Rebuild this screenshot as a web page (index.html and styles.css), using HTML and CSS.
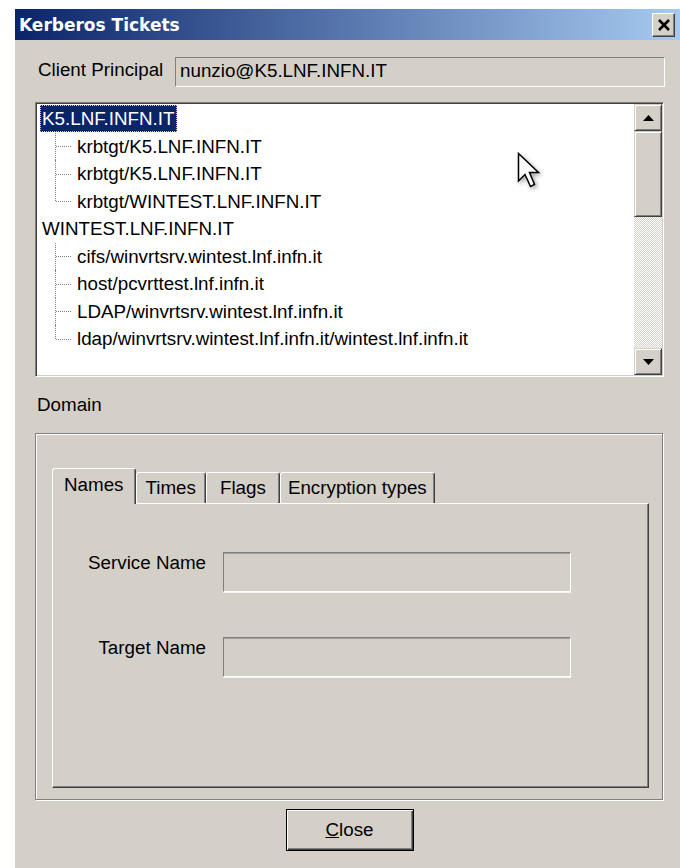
FILE: index.html
```html
<!DOCTYPE html>
<html lang="en">
<head>
<meta charset="utf-8">
<title>Kerberos Tickets</title>
<link rel="stylesheet" href="styles.css">
</head>
<body>
<div class="window">
  <div class="titlebar">
    <span class="title">Kerberos Tickets</span>
    <button class="caption-btn" aria-label="Close">
      <svg width="14" height="12" viewBox="0 0 14 12"><path d="M2 1 L12 11 M12 1 L2 11" stroke="#000" stroke-width="2.6" fill="none"/></svg>
    </button>
  </div>

  <div class="client-row">
    <span class="client-label">Client Principal</span>
    <div class="static-field">nunzio@K5.LNF.INFN.IT</div>
  </div>

  <div class="tree">
    <ul class="tree-list">
      <li class="realm">
        <div class="row"><span class="item selected">K5.LNF.INFN.IT</span></div>
        <ul class="children">
          <li class="row"><span class="item">krbtgt/K5.LNF.INFN.IT</span></li>
          <li class="row"><span class="item">krbtgt/K5.LNF.INFN.IT</span></li>
          <li class="row"><span class="item">krbtgt/WINTEST.LNF.INFN.IT</span></li>
        </ul>
      </li>
      <li class="realm">
        <div class="row"><span class="item">WINTEST.LNF.INFN.IT</span></div>
        <ul class="children">
          <li class="row"><span class="item">cifs/winvrtsrv.wintest.lnf.infn.it</span></li>
          <li class="row"><span class="item">host/pcvrttest.lnf.infn.it</span></li>
          <li class="row"><span class="item">LDAP/winvrtsrv.wintest.lnf.infn.it</span></li>
          <li class="row"><span class="item">ldap/winvrtsrv.wintest.lnf.infn.it/wintest.lnf.infn.it</span></li>
        </ul>
      </li>
    </ul>
    <div class="scrollbar">
      <div class="sb-btn">
        <svg width="11" height="6" viewBox="0 0 11 6"><polygon points="5.5,0 11,6 0,6" fill="#000"/></svg>
      </div>
      <div class="sb-track"><div class="sb-thumb"></div></div>
      <div class="sb-btn">
        <svg width="11" height="6" viewBox="0 0 11 6"><polygon points="0,0 11,0 5.5,6" fill="#000"/></svg>
      </div>
    </div>
    <svg class="pointer" width="26" height="38" viewBox="0 0 26 38">
      <polygon points="1.5,1.5 1.5,29 8,22.5 13.5,34.5 17.5,32.5 12.5,20.5 21.5,20.5" fill="#fff" stroke="#000" stroke-width="1.5" stroke-linejoin="miter"/>
    </svg>
  </div>

  <div class="domain-label">Domain</div>

  <div class="group">
    <div class="tabs">
      <div class="tab active">Names</div>
      <div class="tab">Times</div>
      <div class="tab tab-wide">Flags</div>
      <div class="tab tab-tight">Encryption types</div>
    </div>
    <div class="tab-panel">
      <div class="field-grid">
        <span class="field-label">Service Name</span>
        <div class="etched-field"></div>
        <span class="field-label">Target Name</span>
        <div class="etched-field"></div>
      </div>
    </div>
  </div>

  <div class="actions">
    <button class="push-btn default"><u>C</u>lose</button>
  </div>
</div>
</body>
</html>
```

FILE: styles.css
```css
* {
  box-sizing: border-box;
}

html,
body {
  margin: 0;
  padding: 0;
  background: #fff;
}

body {
  padding: 9px 0 0 15px;
  font-family: "Liberation Sans", Arial, sans-serif;
  font-size: 18.8px;
  color: #000;
}

/* dialog frame */
.window {
  width: 665px;
  height: 859px;
  background: #d4d0c8;
  display: flex;
  flex-direction: column;
  overflow: hidden;
}

.titlebar {
  flex: none;
  height: 31px;
  display: flex;
  align-items: center;
  justify-content: space-between;
  padding: 0 5px 0 4px;
  background: linear-gradient(to right, #0a246a, #a6caf0);
}

.title {
  font-family: "DejaVu Sans", sans-serif;
  font-weight: bold;
  font-size: 17px;
  color: #fff;
}

.caption-btn {
  width: 23px;
  height: 24px;
  padding: 0;
  margin: 0;
  display: flex;
  align-items: center;
  justify-content: center;
  background: #d4d0c8;
  border: 1px solid;
  border-color: #fff #404040 #404040 #fff;
  box-shadow: inset -1px -1px #808080;
}

/* principal row */
.client-row {
  flex: none;
  display: flex;
  align-items: flex-start;
  margin-top: 17px;
  padding: 0 15px 0 23px;
}

.client-label {
  flex: none;
  width: 137px;
  padding-top: 2px;
  line-height: 22px;
  white-space: nowrap;
}

.static-field {
  flex: 1;
  height: 30px;
  line-height: 22px;
  padding: 2px 0 0 4px;
  border: 1px solid;
  border-color: #808080 #fff #fff #808080;
  white-space: nowrap;
}

/* tree view */
.tree {
  flex: none;
  position: relative;
  height: 275px;
  margin: 15px 16px 0 20px;
  padding: 1px;
  display: flex;
  background: #fff;
  border: 1px solid;
  border-color: #808080 #fff #fff #808080;
  box-shadow: inset 1px 1px #404040, inset -1px -1px #d4d0c8;
}

.tree-list,
.children {
  list-style: none;
  margin: 0;
  padding: 0;
}

.tree-list {
  flex: 1;
  padding-top: 1px;
  overflow: hidden;
}

.row {
  height: 27.5px;
  display: flex;
  align-items: center;
  white-space: nowrap;
}

.realm > .row {
  padding-left: 3px;
}

.item {
  height: 27px;
  line-height: 27px;
  padding: 0 2px;
}

.item.selected {
  background: #0a246a;
  color: #fff;
  outline: 1px dotted #d8c880;
  outline-offset: -1px;
}

.children > li {
  position: relative;
  padding-left: 38px;
}

/* dotted connector lines */
.children > li::before {
  content: "";
  position: absolute;
  left: 18px;
  top: 0;
  bottom: 0;
  border-left: 1px dotted #808080;
}

.children > li:last-child::before {
  bottom: 50%;
}

.children > li::after {
  content: "";
  position: absolute;
  left: 19px;
  top: 50%;
  width: 15px;
  border-top: 1px dotted #808080;
}

/* vertical scrollbar */
.scrollbar {
  flex: none;
  width: 28px;
  display: flex;
  flex-direction: column;
}

.sb-btn,
.sb-thumb {
  background: #d4d0c8;
  border: 1px solid;
  border-color: #d4d0c8 #404040 #404040 #d4d0c8;
  box-shadow: inset 1px 1px #fff, inset -1px -1px #808080;
}

.sb-btn {
  flex: none;
  height: 27px;
  display: flex;
  align-items: center;
  justify-content: center;
}

.sb-track {
  flex: 1;
  background: repeating-conic-gradient(#fff 0 25%, #d4d0c8 0 50%) 0 0 / 2px 2px;
}

.sb-thumb {
  height: 86px;
}

.pointer {
  position: absolute;
  left: 481px;
  top: 49px;
  filter: drop-shadow(2px 2px 2px rgba(0, 0, 0, 0.35));
}

.domain-label {
  flex: none;
  line-height: 22px;
  margin: 17px 0 0 22px;
}

/* group box with tab control */
.group {
  flex: none;
  height: 367px;
  margin: 17px 17px 0 20px;
  padding: 34px 13px 11px 16px;
  border: 1px solid #808080;
  box-shadow: inset 1px 1px #fff, 1px 1px #fff;
  display: flex;
  flex-direction: column;
}

.tabs {
  flex: none;
  height: 35px;
  display: flex;
  align-items: flex-end;
  position: relative;
  z-index: 1;
}

.tab {
  height: 31px;
  padding: 0 9px;
  line-height: 29px;
  background: #d4d0c8;
  border: 1px solid;
  border-bottom: 0;
  border-color: #fff #404040 transparent #fff;
  border-radius: 3px 3px 0 0;
  box-shadow: inset -1px 0 #808080;
  white-space: nowrap;
}

.tab-wide {
  padding: 0 13px;
}

.tab-tight {
  padding: 0 7px;
}

.tab.active {
  height: 36px;
  margin-bottom: -1px;
  line-height: 31px;
  padding: 0 11px;
}

.tab-panel {
  flex: 1;
  border: 1px solid;
  border-color: #fff #404040 #404040 #fff;
  box-shadow: inset -1px -1px #808080;
  padding-top: 48px;
}

.field-grid {
  display: grid;
  grid-template-columns: 153px 348px;
  column-gap: 17px;
  row-gap: 45px;
  align-items: start;
}

.field-label {
  line-height: 22px;
  text-align: right;
  white-space: nowrap;
}

.etched-field {
  height: 40px;
  border: 1px solid;
  border-color: #808080 #fff #fff #808080;
  box-shadow: inset 0 1px #a0a0a0, 0 1px #f4f4f4;
}

/* dialog buttons */
.actions {
  flex: none;
  display: flex;
  justify-content: center;
  margin: 9px 16px 0 20px;
}

.push-btn {
  width: 128px;
  height: 42px;
  font: inherit;
  color: #000;
  background: #d4d0c8;
  border: 1px solid #000;
  box-shadow: inset 1px 1px #fff, inset -1px -1px #404040, inset -2px -2px #808080;
  padding: 0;
}
```
